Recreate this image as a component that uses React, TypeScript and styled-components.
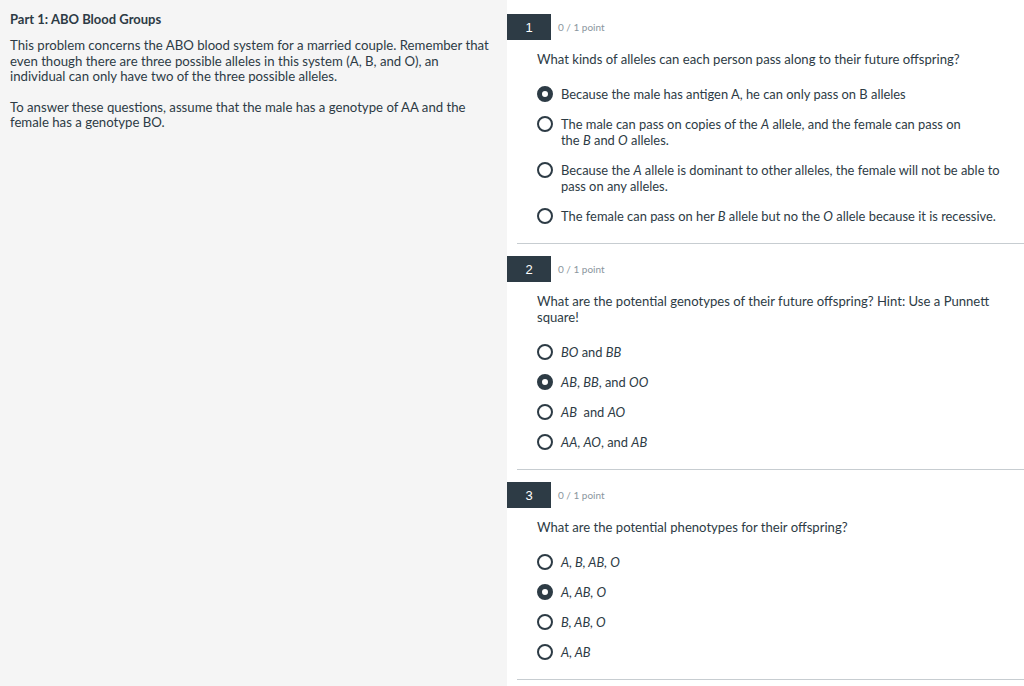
import React from 'react';
import styled, { createGlobalStyle } from 'styled-components';

const GlobalStyle = createGlobalStyle`
  html, body {
    margin: 0;
    padding: 0;
    background: #ffffff;
  }
  body {
    font-family: Lato, "Open Sans", sans-serif;
    color: #2d3b45;
  }
`;

const Page = styled.div`
  display: flex;
  width: 1024px;
  height: 686px;
  overflow: hidden;
`;

const Intro = styled.aside`
  width: 507px;
  flex-shrink: 0;
  box-sizing: border-box;
  background: #f5f5f5;
  padding: 11px 14px 0 10px;
`;

const IntroTitle = styled.h2`
  margin: 0 0 11px;
  font-size: 13px;
  font-weight: 700;
  line-height: 16px;
`;

const IntroText = styled.p`
  margin: 0 0 15px;
  font-size: 13.2px;
  line-height: 15.5px;
`;

const Questions = styled.main`
  flex: 1;
  display: flex;
  flex-direction: column;
  padding-top: 14px;
  background: #ffffff;
`;

const QuestionCard = styled.section`
  background: #ffffff;
  padding-bottom: 12px;
`;

const CardHeader = styled.div`
  display: flex;
  align-items: center;
  gap: 7px;
`;

const Badge = styled.div`
  flex-shrink: 0;
  width: 44px;
  height: 26px;
  background: #2d3b45;
  color: #ffffff;
  font-family: "Liberation Sans", Arial, sans-serif;
  font-size: 13px;
  display: flex;
  align-items: center;
  justify-content: center;
`;

const Points = styled.span`
  font-size: 10px;
  color: #8b969e;
`;

const CardBody = styled.div`
  margin-left: 10px;
  padding: 11px 14px 19px 20px;
  border-bottom: 1px solid #c7cdd1;
`;

const Prompt = styled.p`
  margin: 0 0 19px;
  font-size: 13.1px;
  line-height: 16px;
`;

const Options = styled.ul`
  list-style: none;
  margin: 0;
  padding: 0;
  display: flex;
  flex-direction: column;
  gap: 14px;
`;

const Option = styled.li`
  display: flex;
  align-items: flex-start;
  gap: 8px;
  font-size: 12.9px;
  line-height: 16px;
`;

const Radio = styled.span<{ $checked?: boolean }>`
  flex-shrink: 0;
  box-sizing: border-box;
  width: 16px;
  height: 16px;
  border-radius: 50%;
  border: ${(p) => (p.$checked ? '5px' : '2px')} solid #2d3b45;
  background: #ffffff;
`;

const Footer = styled.div`
  flex: 1;
  background: #f5f5f5;
`;

type Choice = { label: React.ReactNode; checked?: boolean };

interface QuestionProps {
  number: number;
  prompt: React.ReactNode;
  choices: Choice[];
}

const Question = ({ number, prompt, choices }: QuestionProps) => (
  <QuestionCard>
    <CardHeader>
      <Badge>{number}</Badge>
      <Points>0 / 1 point</Points>
    </CardHeader>
    <CardBody>
      <Prompt>{prompt}</Prompt>
      <Options>
        {choices.map((c, i) => (
          <Option key={i}>
            <Radio $checked={c.checked} />
            <span>{c.label}</span>
          </Option>
        ))}
      </Options>
    </CardBody>
  </QuestionCard>
);

const q1: Choice[] = [
  { label: 'Because the male has antigen A, he can only pass on B alleles', checked: true },
  {
    label: (
      <>
        The male can pass on copies of the <i>A</i> allele, and the female can pass on
        <br />
        the <i>B</i> and <i>O</i> alleles.
      </>
    ),
  },
  {
    label: (
      <>
        Because the <i>A</i> allele is dominant to other alleles, the female will not be able to pass on any alleles.
      </>
    ),
  },
  {
    label: (
      <>
        The female can pass on her <i>B</i> allele but no the <i>O</i> allele because it is recessive.
      </>
    ),
  },
];

const q2: Choice[] = [
  { label: <><i>BO</i> and <i>BB</i></> },
  { label: <><i>AB</i>, <i>BB</i>, and <i>OO</i></>, checked: true },
  { label: <><i>AB</i>&nbsp; and <i>AO</i></> },
  { label: <><i>AA</i>, <i>AO</i>, and <i>AB</i></> },
];

const q3: Choice[] = [
  { label: <i>A, B, AB, O</i> },
  { label: <i>A, AB, O</i>, checked: true },
  { label: <i>B, AB, O</i> },
  { label: <i>A, AB</i> },
];

export default function App() {
  return (
    <>
      <GlobalStyle />
      <Page>
        <Intro>
          <IntroTitle>Part 1: ABO Blood Groups</IntroTitle>
          <IntroText>
            This problem concerns the ABO blood system for a married couple. Remember that even though there are
            three possible alleles in this system (A, B, and O), an individual can only have two of the three
            possible alleles.
          </IntroText>
          <IntroText>
            To answer these questions, assume that the male has a genotype of AA and the female has a genotype BO.
          </IntroText>
        </Intro>
        <Questions>
          <Question
            number={1}
            prompt="What kinds of alleles can each person pass along to their future offspring?"
            choices={q1}
          />
          <Question
            number={2}
            prompt="What are the potential genotypes of their future offspring? Hint: Use a Punnett square!"
            choices={q2}
          />
          <Question number={3} prompt="What are the potential phenotypes for their offspring?" choices={q3} />
          <Footer />
        </Questions>
      </Page>
    </>
  );
}
